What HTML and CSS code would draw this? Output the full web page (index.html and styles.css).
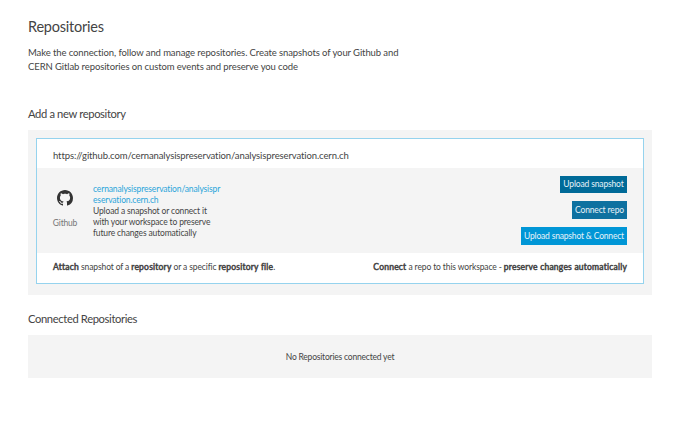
FILE: index.html
```html
<!DOCTYPE html>
<html lang="en">
<head>
<meta charset="utf-8">
<title>Repositories</title>
<link rel="stylesheet" href="styles.css">
</head>
<body>
<main class="page">
  <h1 class="title"><span>Repositories</span></h1>
  <p class="intro"><span class="intro-a">Make the connection, follow and manage repositories. Create snapshots of your Github and</span><br><span class="intro-b">CERN Gitlab repositories on custom events and preserve you code</span></p>

  <h2 class="heading heading-add"><span>Add a new repository</span></h2>
  <section class="panel">
    <div class="card">
      <div class="url"><span>https://github.com/cernanalysispreservation/analysispreservation.cern.ch</span></div>
      <div class="repo">
        <div class="provider">
          <svg class="logo" viewBox="0 0 16 16" aria-hidden="true"><path d="M8 0C3.58 0 0 3.58 0 8c0 3.54 2.29 6.53 5.47 7.59.4.07.55-.17.55-.38 0-.19-.01-.82-.01-1.49-2.01.37-2.53-.49-2.69-.94-.09-.23-.48-.94-.82-1.13-.28-.15-.68-.52-.01-.53.63-.01 1.08.58 1.23.82.72 1.21 1.87.87 2.33.66.07-.52.28-.87.51-1.07-1.78-.2-3.64-.89-3.64-3.95 0-.87.31-1.59.82-2.15-.08-.2-.36-1.02.08-2.12 0 0 .67-.21 2.2.82.64-.18 1.32-.27 2-.27s1.36.09 2 .27c1.53-1.04 2.2-.82 2.2-.82.44 1.1.16 1.92.08 2.12.51.56.82 1.27.82 2.15 0 3.07-1.87 3.75-3.65 3.95.29.25.54.73.54 1.48 0 1.07-.01 1.93-.01 2.2 0 .21.15.46.55.38A8.01 8.01 0 0 0 16 8c0-4.42-3.58-8-8-8z"/></svg>
          <span class="provider-name">Github</span>
        </div>
        <div class="details">
          <a class="link"><span>cernanalysispreservation/analysispr</span><br><span>eservation.cern.ch</span></a>
          <p class="hint"><span>Upload a snapshot or connect it</span><br><span>with your workspace to preserve</span><br><span>future changes automatically</span></p>
        </div>
        <div class="actions">
          <button class="button button-upload">Upload snapshot</button>
          <button class="button button-connect">Connect repo</button>
          <button class="button button-both">Upload snapshot &amp; Connect</button>
        </div>
      </div>
      <div class="notes">
        <span class="note-a"><b>Attach</b> snapshot of a <b>repository</b> or a specific <b>repository file</b>.</span>
        <span class="note-b"><b>Connect</b> a repo to this workspace - <b>preserve changes automatically</b></span>
      </div>
    </div>
  </section>

  <h2 class="heading heading-connected"><span>Connected Repositories</span></h2>
  <section class="panel-empty"><span>No Repositories connected yet</span></section>
</main>
</body>
</html>
```

FILE: styles.css
```css
* { box-sizing: border-box; margin: 0; padding: 0; }
body { background: #fff; color: #444; font-family: Lato, "Liberation Sans", sans-serif; font-size: 8.5px; line-height: 11px; font-variant-ligatures: none; }
.page { padding: 17px 30px 0 28px; }
.title { font-size: 14.5px; line-height: 20px; font-weight: 400; letter-spacing: -0.22px; }
.intro { margin-top: 9px; font-size: 9.5px; line-height: 14px; letter-spacing: -0.1px; white-space: nowrap; }
.heading { font-size: 11.2px; line-height: 16px; font-weight: 400; letter-spacing: -0.36px; }
.heading-add { margin-top: 32px; }
.panel { margin-top: 8px; padding: 8px; height: 165px; background: #f4f4f4; }
.card { height: 146px; border: 1px solid #95d3ee; background: #fff; }
.url { height: 29px; padding: 10px 16px 0; font-size: 9.5px; line-height: 14px; letter-spacing: -0.11px; }
.repo { display: flex; height: 85px; padding: 8px 16px; background: #f4f4f4; }
.provider { display: flex; flex-direction: column; align-items: center; width: 24px; padding-top: 14px; }
.logo { width: 16px; height: 16px; fill: #333; }
.provider-name { margin-top: 12px; color: #777; line-height: 11px; letter-spacing: -0.2px; }
.details { margin-left: 16px; padding-top: 8px; letter-spacing: -0.14px; white-space: nowrap; }
.link { display: block; color: #2ba4da; }
.actions { display: flex; flex-direction: column; align-items: flex-end; gap: 8px; margin-left: auto; }
.button { height: 18px; border: 0; color: #e6f2f8; font: inherit; letter-spacing: -0.15px; text-align: center; white-space: nowrap; }
.button-upload { width: 67px; height: 17px; background: #006a98; }
.button-connect { width: 55px; background: #0e71a0; }
.button-both { width: 106px; background: #0096d6; letter-spacing: -0.18px; }
.notes { display: flex; justify-content: space-between; padding: 9px 16px; letter-spacing: -0.12px; white-space: nowrap; }
.notes b { font-weight: 400; letter-spacing: 0.22px; -webkit-text-stroke: 0.5px #444; }
.heading-connected { margin-top: 16px; }
.panel-empty { display: flex; align-items: center; justify-content: center; height: 43px; margin-top: 8px; padding-top: 2px; background: #f4f4f4; letter-spacing: -0.2px; }
```
